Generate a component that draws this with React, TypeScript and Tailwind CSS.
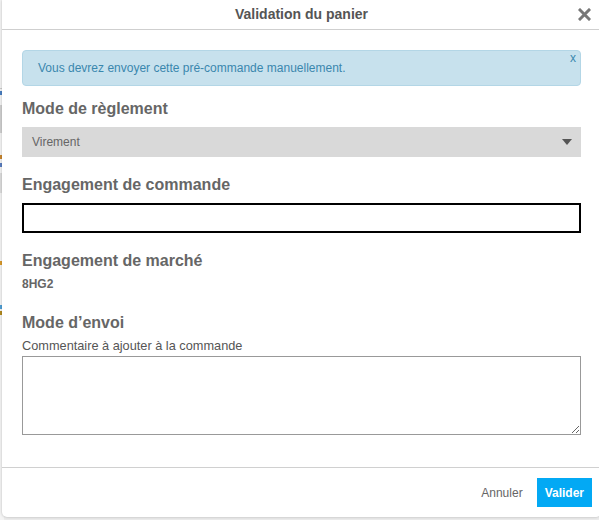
import { useState } from "react";

export default function App() {
  const [comment, setComment] = useState("");
  const [showAlert, setShowAlert] = useState(true);

  return (
    <div className="relative h-[520px] w-[599px] overflow-hidden bg-[#ececec] font-['Liberation_Sans',Arial,sans-serif]">
      {/* page behind the modal, only a sliver shows */}
      <div className="absolute left-0 top-0 flex h-full w-[4px] flex-col bg-[#f4f4f4]">
        <div className="mt-[88px] h-px bg-[#ccc]" />
        <div className="mt-[2px] h-[4px] w-[2px] bg-[#4a7fc1]" />
        <div className="mt-[10px] h-[28px] bg-[#d0d0d0]" />
        <div className="mt-[22px] h-[4px] w-[2px] bg-[#c9862e]" />
        <div className="mt-[4px] h-[4px] w-[2px] bg-[#5a7ec0]" />
        <div className="mt-[6px] h-[20px] bg-[#dcdcdc]" />
        <div className="mt-[68px] h-[4px] w-[2px] bg-[#d99a2b]" />
        <div className="mt-[40px] h-[4px] w-[2px] bg-[#4f9fd5]" />
        <div className="mt-[2px] h-[4px] w-[2px] bg-[#b38a1f]" />
      </div>

      <div className="relative ml-[2px] flex h-[517px] w-[599px] flex-col rounded-b-[5px] bg-white shadow-[0_0_3px_rgba(0,0,0,0.25)]">
        <header className="relative flex h-[30px] shrink-0 items-center justify-center border-b border-[#cfcfcf]">
          <h1 className="text-[14px] font-bold text-[#555]">Validation du panier</h1>
          <button type="button" aria-label="Fermer" className="absolute right-[10px] top-[8px]">
            <svg width="13" height="13" viewBox="0 0 13 13">
              <path d="M2 2 L11 11 M11 2 L2 11" stroke="#777" strokeWidth="3" strokeLinecap="square" />
            </svg>
          </button>
        </header>

        <main className="flex flex-col pl-[20px] pr-[20px]">
          {showAlert && (
            <div className="relative mt-[20px] flex h-[36px] items-center rounded-[4px] border border-[#b3d6e6] bg-[#c7e1ed] pl-[15px] text-[12px] text-[#3a87ad]">
              Vous devrez envoyer cette pré-commande manuellement.
              <button
                type="button"
                onClick={() => setShowAlert(false)}
                className="absolute right-[4px] top-0 text-[12px] leading-[14px] text-[#3a87ad]"
              >
                x
              </button>
            </div>
          )}

          <h2 className="mt-[13px] text-[16px] font-bold leading-[20px] text-[#666]">Mode de règlement</h2>
          <div className="mt-[8px] flex h-[30px] items-center justify-between bg-[#d9d9d9] pl-[10px] pr-[9px] text-[12px] text-[#666]">
            <span>Virement</span>
            <svg width="10" height="6" viewBox="0 0 10 6">
              <path d="M0 0 L10 0 L5 6 Z" fill="#555" />
            </svg>
          </div>

          <h2 className="mt-[18px] text-[16px] font-bold leading-[20px] text-[#666]">Engagement de commande</h2>
          <input
            type="text"
            className="mt-[8px] h-[30px] border-2 border-black px-[8px] text-[12px] outline-none"
          />

          <h2 className="mt-[18px] text-[16px] font-bold leading-[20px] text-[#666]">Engagement de marché</h2>
          <p className="mt-[6px] text-[12px] font-bold leading-[14px] text-[#666]">8HG2</p>

          <h2 className="mt-[22px] text-[16px] font-bold leading-[20px] text-[#666]">Mode d’envoi</h2>
          <label className="mt-[6px] text-[12.75px] leading-[14px] text-[#555]">
            Commentaire à ajouter à la commande
          </label>
          <textarea
            value={comment}
            onChange={(e) => setComment(e.target.value)}
            className="mt-[3px] h-[79px] border border-[#999] px-[6px] py-[4px] text-[12px] outline-none"
          />
        </main>

        <footer className="mt-auto flex h-[50px] items-center justify-end gap-[14px] border-t border-[#d0d0d0] pr-[9px]">
          <button type="button" className="text-[12px] text-[#666]">
            Annuler
          </button>
          <button type="button" className="h-[29px] bg-[#03a9f4] px-[8px] text-[12px] font-bold text-white">
            Valider
          </button>
        </footer>
      </div>
    </div>
  );
}
